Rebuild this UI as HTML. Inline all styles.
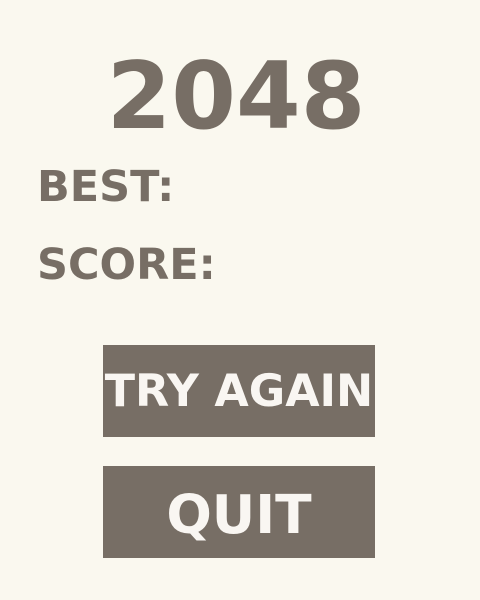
<!DOCTYPE html>
<html><head><style>
html,body{margin:0;padding:0;}
body{width:480px;height:600px;background:#faf8ef;position:relative;overflow:hidden;font-family:"DejaVu Sans","Liberation Sans",sans-serif;font-weight:bold;color:#776e65;}
.t{position:absolute;line-height:1;white-space:nowrap;}
.btn{position:absolute;left:103px;width:272px;height:92px;background:#776e65;}
</style></head><body>
<div class="t" style="left:0;width:472px;text-align:center;top:49.5px;font-size:93px;">2048</div>
<div class="t" style="left:37px;top:165.5px;font-size:43px;">BEST:</div>
<div class="t" style="left:37px;top:243.5px;font-size:43px;">SCORE:</div>
<div class="btn" style="top:345px;"></div>
<div class="btn" style="top:466px;"></div>
<div class="t" style="left:103px;width:272px;text-align:center;top:369.5px;font-size:44.4px;color:#f9f6f2;">TRY AGAIN</div>
<div class="t" style="left:103px;width:272px;text-align:center;top:488px;font-size:53.5px;color:#f9f6f2;">QUIT</div>
</body></html>
